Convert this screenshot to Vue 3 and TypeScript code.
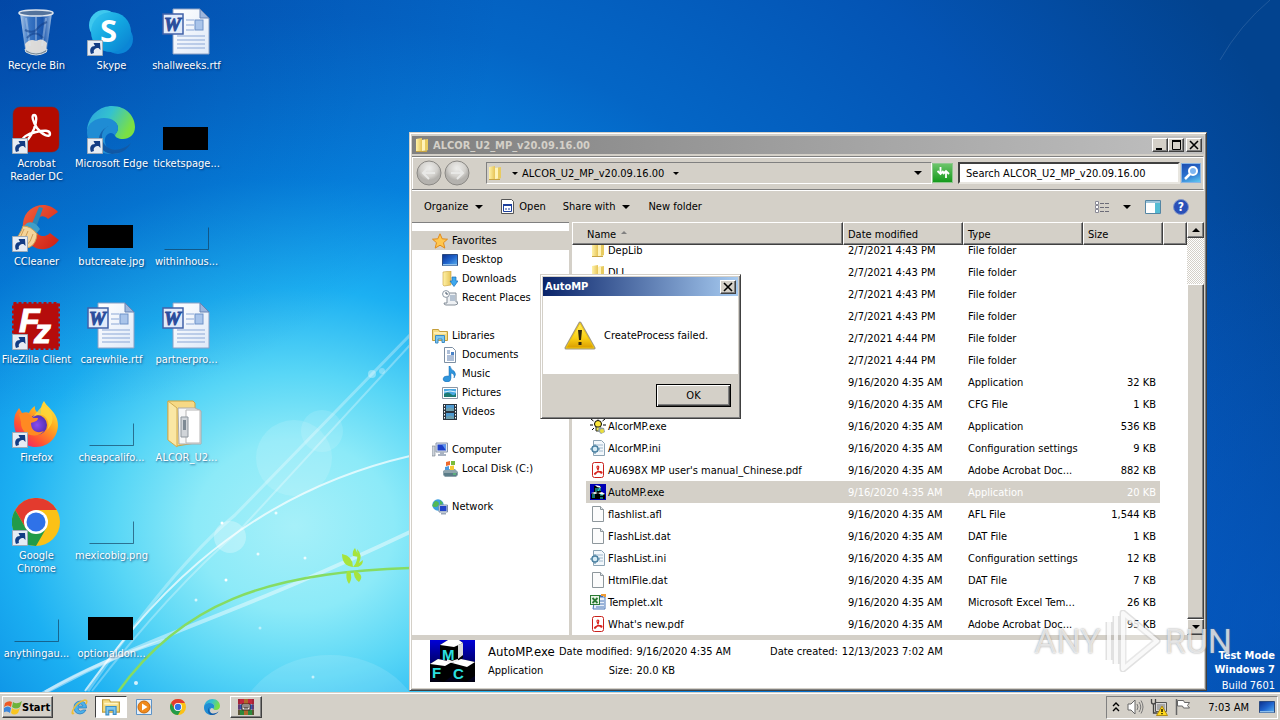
<script setup lang="ts">
import { ref } from 'vue'

interface Shortcut { label: string; icon: string; link?: boolean }
interface NavItem { label: string; icon: string; child?: boolean; gap?: boolean; current?: boolean }
interface FileRow { name: string; icon: string; date: string; type: string; size: string }
interface Letter { text: string; x: number; y: number; kind: string }

const letters: Record<string, Letter[]> = {
  skype: [{ text: 'S', x: 13, y: 34, kind: 'skype-s' }],
  word: [{ text: 'W', x: 2, y: 23, kind: 'word-w' }],
  filezilla: [{ text: 'F', x: 7, y: 30, kind: 'fz-f' }, { text: 'z', x: 22, y: 41, kind: 'fz-z' }],
}

const shortcuts: Shortcut[] = [
  { label: 'Recycle Bin', icon: 'bin' },
  { label: 'Acrobat Reader DC', icon: 'acrobat', link: true },
  { label: 'CCleaner', icon: 'ccleaner', link: true },
  { label: 'FileZilla Client', icon: 'filezilla', link: true },
  { label: 'Firefox', icon: 'firefox', link: true },
  { label: 'Google Chrome', icon: 'chrome', link: true },
  { label: 'anythingau...', icon: 'clear' },
  { label: 'Skype', icon: 'skype', link: true },
  { label: 'Microsoft\u00a0Edge', icon: 'edge', link: true },
  { label: 'butcreate.jpg', icon: 'black' },
  { label: 'carewhile.rtf', icon: 'word' },
  { label: 'cheapcalifo...', icon: 'clear' },
  { label: 'mexicobig.png', icon: 'clear' },
  { label: 'optionaldon...', icon: 'black' },
  { label: 'shallweeks.rtf', icon: 'word' },
  { label: 'ticketspage...', icon: 'black' },
  { label: 'withinhous...', icon: 'clear' },
  { label: 'partnerpro...', icon: 'word' },
  { label: 'ALCOR_U2...', icon: 'bigfolder' },
]

const places: NavItem[] = [
  { label: 'Favorites', icon: 'star', current: true },
  { label: 'Desktop', icon: 'desktop', child: true },
  { label: 'Downloads', icon: 'downloads', child: true },
  { label: 'Recent Places', icon: 'recent', child: true },
  { label: 'Libraries', icon: 'libraries', gap: true },
  { label: 'Documents', icon: 'document', child: true },
  { label: 'Music', icon: 'music', child: true },
  { label: 'Pictures', icon: 'pictures', child: true },
  { label: 'Videos', icon: 'videos', child: true },
  { label: 'Computer', icon: 'computer', gap: true },
  { label: 'Local Disk (C:)', icon: 'disk', child: true },
  { label: 'Network', icon: 'network', gap: true },
]

const feb = (m: number) => `2/7/2021 4:${m} PM`
const sep = '9/16/2020 4:35 AM'
const files: FileRow[] = [
  { name: 'DepLib', icon: 'folder', date: feb(43), type: 'File folder', size: '' },
  { name: 'DLL', icon: 'folder', date: feb(43), type: 'File folder', size: '' },
  { name: '', icon: 'folder', date: feb(43), type: 'File folder', size: '' },
  { name: '', icon: 'folder', date: feb(43), type: 'File folder', size: '' },
  { name: '', icon: 'folder', date: feb(44), type: 'File folder', size: '' },
  { name: '', icon: 'folder', date: feb(44), type: 'File folder', size: '' },
  { name: '', icon: 'page', date: sep, type: 'Application', size: '32 KB' },
  { name: '', icon: 'page', date: sep, type: 'CFG File', size: '1 KB' },
  { name: 'AlcorMP.exe', icon: 'bulb', date: sep, type: 'Application', size: '536 KB' },
  { name: 'AlcorMP.ini', icon: 'ini', date: sep, type: 'Configuration settings', size: '9 KB' },
  { name: "AU698X MP user's manual_Chinese.pdf", icon: 'pdf', date: sep, type: 'Adobe Acrobat Doc...', size: '882 KB' },
  { name: 'AutoMP.exe', icon: 'mfc', date: sep, type: 'Application', size: '20 KB' },
  { name: 'flashlist.afl', icon: 'page', date: sep, type: 'AFL File', size: '1,544 KB' },
  { name: 'FlashList.dat', icon: 'page', date: sep, type: 'DAT File', size: '1 KB' },
  { name: 'FlashList.ini', icon: 'ini', date: sep, type: 'Configuration settings', size: '12 KB' },
  { name: 'HtmlFile.dat', icon: 'page', date: sep, type: 'DAT File', size: '7 KB' },
  { name: 'Templet.xlt', icon: 'excel', date: sep, type: 'Microsoft Excel Tem...', size: '26 KB' },
  { name: "What's new.pdf", icon: 'pdf', date: sep, type: 'Adobe Acrobat Doc...', size: '95 KB' },
]

const selected = ref('AutoMP.exe')
const dialogOpen = ref(true)
const query = ref('')
</script>

<template>
  <svg class="defs" width="0" height="0" aria-hidden="true">
    <defs>
      <linearGradient id="gBin" x1="0" x2="1" y1="0" y2="0"><stop offset="0" stop-color="#d4e4f4" stop-opacity=".85" /><stop offset=".3" stop-color="#6f9fdd" stop-opacity=".5" /><stop offset=".7" stop-color="#2a5cae" stop-opacity=".55" /><stop offset="1" stop-color="#c8dcf2" stop-opacity=".8" /></linearGradient>
      <linearGradient id="gSkype" x1="0" x2="1" y1="0" y2="1"><stop offset="0" stop-color="#38c6f0" /><stop offset=".5" stop-color="#12a5e0" /><stop offset="1" stop-color="#0a7cd0" /></linearGradient>
      <linearGradient id="gPaper" x1="0" x2="1" y1="0" y2="1"><stop offset="0" stop-color="#fff" /><stop offset="1" stop-color="#dfe9f8" /></linearGradient>
      <linearGradient id="gEdgeA" x1="0" x2="1" y1="0" y2=".4"><stop offset="0" stop-color="#2a9fe0" /><stop offset=".5" stop-color="#34c2cf" /><stop offset="1" stop-color="#7be043" /></linearGradient>
      <linearGradient id="gEdgeB" x1="0" x2="0" y1="0" y2="1"><stop offset="0" stop-color="#1668b4" /><stop offset="1" stop-color="#0f56a4" /></linearGradient>
      <linearGradient id="gFire" x1=".9" x2=".1" y1="0" y2="1"><stop offset="0" stop-color="#fff04a" /><stop offset=".35" stop-color="#ffab1f" /><stop offset=".7" stop-color="#ff5234" /><stop offset="1" stop-color="#e31580" /></linearGradient>
      <radialGradient id="gPurple"><stop offset="0" stop-color="#8a4cf0" /><stop offset="1" stop-color="#5430b4" /></radialGradient>
      <linearGradient id="gFolder" x1="0" x2="1"><stop offset="0" stop-color="#fff2a8" /><stop offset="1" stop-color="#e6c458" /></linearGradient>
      <linearGradient id="gRed" x1="0" x2="1" y1="0" y2="1"><stop offset="0" stop-color="#f4603c" /><stop offset="1" stop-color="#cc1f14" /></linearGradient>
      <linearGradient id="gWarn" x1="0" x2="0" y1="0" y2="1"><stop offset="0" stop-color="#ffef62" /><stop offset=".6" stop-color="#fbd014" /><stop offset="1" stop-color="#d99c00" /></linearGradient>
      <radialGradient id="gOrb" cy=".3"><stop offset="0" stop-color="#eeeeec" /><stop offset=".7" stop-color="#d2d0cc" /><stop offset="1" stop-color="#b4b2ae" /></radialGradient>
      <linearGradient id="gScreen" x1="0" x2="1" y1="0" y2="1"><stop offset="0" stop-color="#0b2f8c" /><stop offset=".5" stop-color="#1f63cc" /><stop offset="1" stop-color="#5cb4f0" /></linearGradient>
      <linearGradient id="gMfc" x1="0" x2="0" y1="0" y2="1"><stop offset="0" stop-color="#0000d8" /><stop offset="1" stop-color="#000010" /></linearGradient>
    </defs>

    <symbol id="i-bin" viewBox="0 0 48 48">
      <path d="M8 5 13 41q11 8 22 0L40 5Z" fill="url(#gBin)" />
      <path d="M13 36q5-6 11-3 6-4 11 2l-1 8q-10 5-20 0Z" fill="#efe7dc" opacity=".9" />
      <path d="m14 10 4 28M34 10l-4 28M24 9v25" stroke="#dceaf8" stroke-opacity=".35" stroke-width="2" />
      <path d="M13 22q8 4 12-1t10-7M15 30q8-9 16 0" stroke="#123e86" stroke-opacity=".55" stroke-width="2" fill="none" />
      <ellipse cx="24" cy="5" rx="17" ry="3" fill="#54739c" stroke="#dfe6ee" stroke-width="1.500" />
      <path d="M13 41q11 8 22 0l-.6 3q-10 6-20.600 0Z" fill="#7b8a96" stroke="#d6dde2" />
    </symbol>
    <symbol id="i-skype" viewBox="0 0 48 48">
      <circle cx="17" cy="17" r="15" fill="#3fc8ee" /><circle cx="31" cy="31" r="15" fill="#0b86d6" />
      <circle cx="24" cy="24" r="20" fill="url(#gSkype)" />
    </symbol>
    <symbol id="i-word" viewBox="0 0 48 48">
      <path d="M11 1h27l9 9v36H11Z" fill="url(#gPaper)" stroke="#8ba0c4" />
      <path d="M38 1v9h9Z" fill="#9db6dc" stroke="#6683b4" />
      <path d="M15 28h28M15 32h28M15 36h28M15 40h28M24 12h8M24 17h8M24 22h8" stroke="#8ba7d6" />
      <rect x="33" y="12" width="8" height="10" fill="#a9c4ea" stroke="#6f92c8" />
      <rect x="1" y="6" width="20" height="20" fill="#e2ebfa" stroke="#4162a8" stroke-width="1.500" />
    </symbol>
    <symbol id="i-acrobat" viewBox="0 0 48 48">
      <rect x="1" y="1" width="46" height="45" rx="7" fill="#b30b00" stroke="#7b2a2a" stroke-opacity=".5" />
      <path d="M11 35C9 32 15 28 24 26c8-2 14-2 14 2s-8 1-13-6C21 16 19 9 22 9s3 6 0 14c-3 7-8 15-11 12Z" fill="none" stroke="#fff" stroke-width="2.400" stroke-linejoin="round" />
    </symbol>
    <symbol id="i-edge" viewBox="0 0 48 48">
      <path d="M0 25C1 8 14 0 25 0c15 0 23 11 23 21 0 8-6 12-12 12-5 0-8-2-8-4 0-1 3-3 3-7 0-5-5-9-12-9C9 13 2 19 0 25Z" fill="url(#gEdgeA)" />
      <path d="M0 26c0-9 9-14 17-14 9 0 14 5 14 10 0 4-3 6-3 8-3-6-11-2-10 6 1 7 8 12 16 10-3 2-7 2-10 2C10 48 0 38 0 26Z" fill="#1f8cd4" />
      <path d="M22 20c-8 3-9 13-4 19 6 7 17 6 26-2-4 8-12 11-19 11-10-1-14-9-13-16 1-6 5-10 10-12Z" fill="url(#gEdgeB)" />
    </symbol>
    <symbol id="i-ccleaner" viewBox="0 0 48 48">
      <path d="M46 8C35-5 13 1 11 19c-2 15 9 28 22 26 6-1 10-4 14-9l-9-7c-6 6-14 3-15-6-1-10 8-14 13-8Z" fill="url(#gRed)" />
      <path d="m27 3 4 1-7 20-5-2Z" fill="#2a86b8" />
      <path d="M15 19q7-3 13 6l-4 5-13-7Z" fill="#3f9fca" />
      <path d="M11 22q8 0 14 8-1 10-7 13-5 3-17-6 7-5 10-15Z" fill="#f4d49a" stroke="#cf9d55" />
      <path d="M12 25Q9 34 4 38M16 27q-3 9-7 13M21 30q-2 8-7 12" stroke="#cf9d55" fill="none" />
    </symbol>
    <symbol id="i-filezilla" viewBox="0 0 48 48">
      <rect x="1.500" y="1.500" width="45" height="45" fill="#b50c0c" stroke="#b50c0c" stroke-width="3" stroke-dasharray="3 2" />
    </symbol>
    <symbol id="i-firefox" viewBox="0 0 48 48">
      <path d="M3 15C4 12 6 10 7 8l3 5c3-1 5-1 7 0 1-3 3-5 6-7-1 5 3 7 6 8 0-6 0-9 3-13 2 5 10 9 13 18 4 13-5 28-21 28C9 47-1 32 3 15Z" fill="url(#gFire)" />
      <circle cx="25" cy="25" r="10" fill="url(#gPurple)" />
      <path d="M7 14c5-2 12 0 14 4h5c0 3-4 4-7 5 0 8 6 11 13 8-7 9-24 4-23-9Z" fill="#ff8a22" />
      <path d="M20 18q10-7 15 1 3 6 0 11 10-10 2-20-3-4-6-5Z" fill="#ffd83a" opacity=".8" />
    </symbol>
    <symbol id="i-chrome" viewBox="0 0 48 48">
      <circle cx="24" cy="24" r="24" fill="#fbc116" />
      <path d="M3.200 12a24 24 0 0 1 41.600 0H24L13.600 30Z" fill="#e33b2e" />
      <path d="M3.200 12 13.600 30 24 36 34.400 30 24 48A24 24 0 0 1 3.200 12Z" fill="#229b48" />
      <circle cx="24" cy="24" r="12" fill="#fff" /><circle cx="24" cy="24" r="9.500" fill="#2f72e8" />
    </symbol>
    <symbol id="i-black" viewBox="0 0 48 48"><rect x="1" y="21" width="45" height="23" /></symbol>
    <symbol id="i-clear" viewBox="0 0 48 48"><path d="M2.500 45.500h44v-22" fill="none" stroke="#123c5a" stroke-opacity=".65" /></symbol>
    <symbol id="i-bigfolder" viewBox="0 0 48 48">
      <path d="M6 1h25l2 2v40l-18 3-9-6Z" fill="#f6d985" stroke="#cba445" />
      <path d="M16 8h17l6 3v33H17Z" fill="#f7f7f7" stroke="#aaa" /><path d="M24 10h14v33H24Z" fill="#fff" stroke="#b5b5b5" />
      <path d="M19 17h7v20h-7z" fill="#d0d4d8" stroke="#8f979e" /><path d="M21 20h3v10h-3z" fill="#7e8a94" />
      <path d="m6 1 9 7v39L6 40Z" fill="#fae7a4" stroke="#d3ad50" />
    </symbol>
    <symbol id="i-link" viewBox="0 0 16 16">
      <path d="M.5.500h15v15H.500Z" fill="#e6ecf4" stroke="#9daab8" />
      <path d="M4 14C2 9 4 6 8 6L6.500 3 13 3l.5 7-2-2C8 8 6 10 7 13Z" fill="#123c84" />
    </symbol>

    <symbol id="i-folder" viewBox="0 0 16 16"><path d="m2 2 6-1v13l-6 1Z" fill="url(#gFolder)" /><path d="m8 3 6-1v11l-2 1-4-1Z" fill="#e8cb60" /><path d="m8 3 3-.5v11L8 14Z" fill="#fff3b8" /><path d="M2 14.500h11" stroke="#c8a444" /></symbol>
    <symbol id="i-page" viewBox="0 0 16 16"><path d="M2.500.500h8l3 3v12h-11Z" fill="#fcfcfc" stroke="#8e979c" /><path d="M10.500.500v3h3" fill="#dfe6ea" stroke="#8e979c" /></symbol>
    <symbol id="i-ini" viewBox="0 0 16 16"><path d="M3.500.500h8l3 3v12h-11Z" fill="#f2f7fb" stroke="#8da4b4" /><path d="M6 5h7M9 8h4M9 11h4" stroke="#9fb8cc" /><circle cx="5" cy="9" r="3" fill="#d7ecf6" stroke="#4f84a4" stroke-width="1.500" /><path d="M5 4v2M5 12v2M0 9h2M8 9h2M2 6l1 1M8 12 7 11M8 6 7 7M2 12l1-1" stroke="#4f84a4" /></symbol>
    <symbol id="i-pdf" viewBox="0 0 16 16"><rect x="2.500" y=".5" width="11" height="15" rx="2" fill="#fff" stroke="#c9211c" /><path d="M4.500 12C4 10.500 12 8.500 12 10.500S7.500 9 7 5.500C6.800 3.500 9 3.500 8.700 5.500 8.500 8 5.500 13.500 4.500 12Z" fill="none" stroke="#d8251f" stroke-width="1.200" /></symbol>
    <symbol id="i-excel" viewBox="0 0 16 16"><path d="M3 1h10v13H3Z" fill="#3b68b0" /><path d="M5 3h10v12H3Z" fill="#e7eef9" stroke="#4d78b8" /><path d="M10 7h4M10 10h4M6 13h8" stroke="#4d78b8" /><path d="M11 1h4v2" stroke="#ee9b35" fill="none" stroke-width="2" /><rect x=".5" y="1.500" width="9" height="9" fill="#eaf6e6" stroke="#2c7a35" /><path d="m2.500 4 5 5m0-5-5 5" stroke="#2c7a35" stroke-width="1.800" /></symbol>
    <symbol id="i-bulb" viewBox="0 0 16 16"><circle cx="8" cy="6" r="3.500" fill="#ffe83a" stroke="#000" /><path d="M8 0v1.500M1 1l2.500 2M15 1l-2.500 2M0 7h3M13 7h3M2 12l2-2" stroke="#000" /><path d="M6 9h4v4H6Z" fill="#e8e14b" stroke="#333" /><path d="m9 9 5 1 1 4-4 2-3-3Z" fill="#92a0a0" /><circle cx="12" cy="13" r="2" fill="#eddf3c" /></symbol>
    <symbol id="i-mfc" viewBox="0 0 45 42">
      <path d="M0 0h45v42H0Z" fill="url(#gMfc)" />
      <path d="m10 5 8-5h11l4 3v15l-8 5-15-4Z" fill="#000" /><path d="m10 5 8-5h11l4 3-9 4Z" fill="#fff" /><path d="m28 5 5-2v12l-5 4Z" fill="#d8d8d8" />
      <path d="m0 24 8-5 14 3v14l-8 6-14-4Z" fill="#000" /><path d="m0 24 8-5 14 3-7 4Z" fill="#fff" />
      <path d="m22 23 9-4 14 3v14l-9 6-14-4Z" fill="#000" /><path d="m22 23 9-4 14 3-8 5Z" fill="#fff" />
      <path d="m17 20 5 2 6-2" stroke="#f4f4f4" stroke-width="2" fill="none" />
    </symbol>
    <symbol id="i-mfc16" viewBox="0 0 16 16">
      <path d="M0 0h16v16H0Z" fill="#0000b4" /><path d="M4 2h7v6l4 2v5H1v-5l3-2Z" fill="#000" />
      <path d="m5 1 5 1 1 2-4-1Z" fill="#fff" /><path d="M6 4v4M8 4v3l2-3v3" stroke="#2ce0e0" fill="none" /><path d="m1 9 4-1 3 1-3 1ZM8 9l4-1 3 2-3 1Z" fill="#fff" /><path d="M2 11h3M2 13h3M10 11h3M10 14h3" stroke="#2ce0e0" />
    </symbol>
    <symbol id="i-star" viewBox="0 0 16 16"><path d="m8 .8 2.200 5 5.300.4-4 3.500 1.300 5.400L8 12.200l-4.800 2.900 1.300-5.400-4-3.500 5.300-.4Z" fill="#ffc74e" stroke="#e08a1c" /></symbol>
    <symbol id="i-desktop" viewBox="0 0 16 16"><path d="M.5 2.500h15v11H.500Z" fill="url(#gScreen)" stroke="#2b4a80" /><path d="M1 12h14v1.500H1Z" fill="#8ec0ec" /></symbol>
    <symbol id="i-downloads" viewBox="0 0 16 16"><path d="m1 1 8-1v14l-7 1-1-1Z" fill="url(#gFolder)" stroke="#caa03a" stroke-width=".6" /><path d="M10 6h4v4h2l-4 5.500L8 10h2Z" fill="#3fa9ee" stroke="#1b6db8" stroke-width=".7" /></symbol>
    <symbol id="i-recent" viewBox="0 0 16 16"><path d="M5 3h9v9h2q0 3-3 3H4q-2 0-2-2h3Z" fill="#eef1f4" stroke="#78838e" stroke-width=".9" /><path d="M8 6h5M8 8h5M8 10h5" stroke="#7c94b0" /><circle cx="4" cy="4" r="3.400" fill="#fff" stroke="#8d99a5" /><path d="M4 2v2h2" stroke="#456" fill="none" /></symbol>
    <symbol id="i-libraries" viewBox="0 0 16 16"><path d="M.5 1.500h6l1 2h8v9H.500Z" fill="#f5dc82" stroke="#c59f3c" /><path d="M2 5h12" stroke="#fff5c5" stroke-width="1.500" /><path d="M3.500 7.500h9v7H10V11H6v4H3.500Z" fill="#7cc6ef" stroke="#3c8cc4" /></symbol>
    <symbol id="i-document" viewBox="0 0 16 16"><path d="M2.500.500h8l3 3v12h-11Z" fill="#fff" stroke="#7d8fa3" /><path d="M5 4h3M5 6h3M5 9h7M5 11h7M5 13h7" stroke="#5c7fb0" /><path d="M9 5h3v3H9Z" fill="#4a83c8" /></symbol>
    <symbol id="i-music" viewBox="0 0 16 16"><path d="M8 0q1 4 4 5 3 3 0 7 1-4-3-5v5q0 4-4 4-4-.5-4-3 .5-3 4-3h2V0Z" fill="#2f95dc" stroke="#1b6cb4" stroke-width=".5" /></symbol>
    <symbol id="i-pictures" viewBox="0 0 16 16"><path d="M.5 2.500h15v11H.500Z" fill="#fff" stroke="#8a97a5" /><path d="M2 4h12v8H2Z" fill="#4aa8e2" /><path d="M2 9q4-3 7 0t5-1v4H2Z" fill="#1d7a72" /><path d="M2 7q6-2 12 0" stroke="#dff4ff" fill="none" /></symbol>
    <symbol id="i-videos" viewBox="0 0 16 16"><path d="M1 0h14v16H1Z" fill="#2c3640" /><path d="M4 1h8v6H4ZM4 9h8v6H4Z" fill="#4f9bd2" /><path d="M4 5q4-3 8 0v2H4ZM4 13q4-3 8 0v2H4Z" fill="#6d9fae" /><path d="M2.500 1v15M13.500 1v15" stroke="#fff" stroke-dasharray="1.500 1.500" /></symbol>
    <symbol id="i-computer" viewBox="0 0 16 16"><path d="M0 4h3v10H0Z" fill="#cdd3da" stroke="#77808c" stroke-width=".6" /><path d="M4 1h11.500v9H4Z" fill="#dfe6f0" stroke="#8a96aa" /><path d="M5.500 2.500h8.500v6H5.500Z" fill="#1c3fc8" /><path d="M10 2.500h4v6Z" fill="#5c94ee" /><path d="M8 10h4v2h2v2H6v-2h2Z" fill="#a9b3c2" /></symbol>
    <symbol id="i-disk" viewBox="0 0 16 16"><path d="m1 10 3-2h9l3 3v3l-2 2H3l-2-2Z" fill="#8ea4ac" /><path d="M2 12h13v2l-1 1H3l-1-1Z" fill="#5b7c88" /><path d="M11 13h3" stroke="#5be070" /><path d="m4 1 4-1v4L4 5Z" fill="#ee6a2c" /><path d="m9 0 4-.1V4L9 4Z" fill="#79bb3c" /><path d="m3 6 4-1v4L3 9Z" fill="#4b9ade" /><path d="m8 5 4-.5V9L8 9Z" fill="#f7ca32" /></symbol>
    <symbol id="i-network" viewBox="0 0 16 16"><circle cx="6" cy="6" r="5.700" fill="#3c9fe0" /><path d="M3 2q4 0 4 3T3 8 1 5ZM8 1l3 3-3 3Z" fill="#52b856" /><path d="M7 6h8.500v7H7Z" fill="#dbe4f0" stroke="#8090a8" /><path d="M8 7h6.500v5H8Z" fill="#2143c8" /><path d="M9 14h5v1.500H9Z" fill="#9aa6b8" /></symbol>

    <symbol id="i-flag" viewBox="0 0 18 18"><path d="M1 5q4-3 7-1L7 9Q4 6 0 9Z" fill="#ee5a24" /><path d="M9 4q4 3 9-1l-2 6q-4 3-8 0Z" fill="#6db33a" /><path d="M0 10q4-3 7 0l-1 5q-3-3-7 0Z" fill="#3c86da" /><path d="M8 10q4 3 8 0l-2 5q-4 3-7 0Z" fill="#f8c520" /></symbol>
    <symbol id="i-ie" viewBox="0 0 18 18"><path d="M15 12q-2 4-6 4-6-.5-6-6.500T9.500 3q6 .5 6 7H7q0 3 2.500 3 1.500 0 2-1ZM7 8h5q-.5-2-2.500-2T7 8Z" fill="#4db2ea" stroke="#1f78c0" stroke-width=".7" fill-rule="evenodd" /><path d="M3 15q-3 2-1-3Q6 4 14 2q3 0 1 4" stroke="#edbe38" stroke-width="1.600" fill="none" /></symbol>
    <symbol id="i-wmp" viewBox="0 0 18 18"><path d="M1.500 1.500h15v15h-15Z" fill="#e5eef7" stroke="#5c93c8" /><circle cx="9" cy="9" r="6" fill="#f08a1d" stroke="#c96a0c" /><path d="m7 5.500 5.500 3.500L7 12.500Z" fill="#fff" /></symbol>
    <symbol id="i-winrar" viewBox="0 0 18 18"><path d="M1 1h16v5H1Z" fill="#c3273e" /><path d="M1 6.500h16v5H1Z" fill="#3356b8" /><path d="M1 12h16v5H1Z" fill="#2c8a3c" /><path d="M1 1h2v16H1ZM15 1h2v16h-2Z" fill="#8a2030" opacity=".5" /><path d="M7 1h4v16H7Z" fill="#b06a2c" /><path d="M5 6h8v6H5Z" fill="#eee" stroke="#3b2b22" /><path d="M7 7v3h4V7M9 7v3" stroke="#3b2b22" fill="none" /></symbol>
    <symbol id="i-speaker" viewBox="0 0 18 18"><path d="M2 6h3l4-4v14l-4-4H2Z" fill="#fff" stroke="#666" /><path d="M11 6q2 3 0 6M13 4q3.500 5 0 10M15 2.500q4 6.500 0 13" fill="none" stroke="#777" /></symbol>
    <symbol id="i-nettray" viewBox="0 0 18 18"><path d="M5.500 4.500h11v9h-11Z" fill="#d8d8d8" stroke="#555" /><path d="M7 6h8v6H7Z" fill="#a8a8a8" /><path d="M1.500 1v3q0 2 2 2t2-2V1M3.500 6v9h4" fill="none" stroke="#444" stroke-width="1.300" /><path d="m12 8 5.500 9.500h-11Z" fill="#ffd91e" stroke="#a37b00" stroke-width=".8" /><path d="M12 11v3M12 15v1.300" stroke="#000" stroke-width="1.300" /></symbol>
    <symbol id="i-action" viewBox="0 0 18 18"><path d="M2.500 1v16" stroke="#666" stroke-width="1.500" /><path d="M3.500 2.500h6l1 2h5l-2 3 2 2.500h-6l-1-2h-5Z" fill="#fff" stroke="#666" /></symbol>
  </svg>

  <main class="screen">
    <section class="desktop">
      <svg class="wall" viewBox="0 0 1280 692" preserveAspectRatio="none" aria-hidden="true">
        <g fill="#fff">
          <circle cx="294" cy="458" r="38" opacity=".13" /><circle cx="322" cy="431" r="21" opacity=".12" /><circle cx="230" cy="537" r="16" opacity=".28" />
          <circle cx="372" cy="374" r="4" opacity=".35" /><circle cx="382" cy="371" r="3" opacity=".3" />
          <ellipse cx="330" cy="730" rx="92" ry="75" opacity=".12" />
          <circle cx="222" cy="523" r="1.500" /><circle cx="276" cy="513" r="1.500" opacity=".8" /><circle cx="258" cy="554" r="1.500" opacity=".8" /><circle cx="305" cy="558" r="1.500" opacity=".8" /><circle cx="226" cy="580" r="1.500" /><circle cx="196" cy="600" r="1.500" opacity=".7" /><circle cx="136" cy="683" r="2" opacity=".8" /><circle cx="260" cy="628" r="1.500" opacity=".5" /><circle cx="313" cy="677" r="1.500" opacity=".6" />
        </g>
        <g fill="none" stroke="#fff">
          <path d="M88 691Q170 570 235 515L410 335" stroke-width="3" opacity=".3" />
          <path d="M92 691Q170 590 240 530L410 345" stroke-width="2" opacity=".3" />
          <path d="M85 691C130 630 220 500 410 456" stroke-width="2" opacity=".7" />
          <path d="M42 694C160 630 220 622 410 532" stroke-width="4" opacity=".45" />
          <path d="M45 692Q100 660 165 640" stroke-width="3" opacity=".5" />
          <path d="M1220 60Q1240 25 1270 0" stroke-width="1" opacity=".12" />
        </g>
        <path d="M118 692C180 605 265 572 410 568" fill="none" stroke="#86dc62" stroke-width="2.500" />
        <path d="M342 554q11 2 11 13-11-1-11-13Zm11 13q6-6 4-18 6 6 2 14l4-3q0 8-10 7M353 556q-1-5 2-8l4 9M347 571q-2 8 2 13 4-6 1-13m5 0q10 4 4 11-6-4-5-11" fill="#a6e43c" />
      </svg>

      <nav class="shortcuts" aria-label="Desktop">
        <a v-for="s in shortcuts" :key="s.label" href="#" class="shortcut">
          <span class="thumb">
            <svg width="48" height="48" aria-hidden="true">
              <use :href="'#i-' + s.icon" />
              <text v-for="l in letters[s.icon] ?? []" :key="l.kind" :class="l.kind" :x="l.x" :y="l.y">{{ l.text }}</text>
            </svg>
            <svg v-if="s.link" class="arrow" width="16" height="16" aria-hidden="true"><use href="#i-link" /></svg>
          </span>
          <span class="caption">{{ s.label }}</span>
        </a>
      </nav>

      <section class="window explorer" aria-label="ALCOR_U2_MP_v20.09.16.00">
        <header class="titlebar inactive">
          <svg width="16" height="16" aria-hidden="true"><use href="#i-folder" /></svg>
          <h1>ALCOR_U2_MP_v20.09.16.00</h1>
          <div class="controls">
            <button class="ctl" aria-label="Minimize"><svg width="12" height="10"><path d="M2 8h6v2H2z" /></svg></button>
            <button class="ctl" aria-label="Maximize"><svg width="12" height="10"><path d="M2.500 1v8.500h8V1" fill="none" stroke="#000" /><path d="M2 0h9v2H2z" /></svg></button>
            <button class="ctl apart" aria-label="Close"><svg width="12" height="10"><path d="m2 1 8 8m0-8-8 8" stroke="#000" stroke-width="1.600" /></svg></button>
          </div>
        </header>

        <div class="navbar">
          <button class="orb" aria-label="Back"><svg width="26" height="26"><circle cx="13" cy="13" r="12" fill="url(#gOrb)" stroke="#8b8985" /><path d="m13 7-6 6 6 6M8 13h11" fill="none" stroke="#e8e8e6" stroke-width="2" /></svg></button>
          <button class="orb" aria-label="Forward"><svg width="26" height="26"><circle cx="13" cy="13" r="12" fill="url(#gOrb)" stroke="#8b8985" /><path d="m13 7 6 6-6 6M18 13H7" fill="none" stroke="#e8e8e6" stroke-width="2" /></svg></button>
          <div class="address">
            <svg width="16" height="16" aria-hidden="true"><use href="#i-folder" /></svg>
            <i class="caret small"></i>
            <a href="#">ALCOR_U2_MP_v20.09.16.00</a>
            <i class="caret small"></i>
            <i class="caret last"></i>
          </div>
          <button class="refresh" aria-label="Refresh"><svg width="18" height="18"><path d="M6.500 3v6M3.500 7l3 3 3-3M12 14V8M9 10l3-3 3 3" fill="none" stroke="#fff" stroke-width="1.800" /></svg></button>
          <input v-model="query" class="search" type="text" aria-label="Search" placeholder="Search ALCOR_U2_MP_v20.09.16.00" />
          <button class="go" aria-label="Search"><svg width="18" height="18"><circle cx="11" cy="7" r="4" fill="#7fb6f0" stroke="#fff" stroke-width="2" /><path d="m8 10-5 5" stroke="#fff" stroke-width="2.500" /></svg></button>
        </div>

        <div class="toolbar">
          <button class="tool">Organize<i class="caret"></i></button>
          <button class="tool open"><svg width="13" height="15" aria-hidden="true"><path d="M.5.500h10l2 2v12H.500Z" fill="#fff" stroke="#555" /><path d="M2 5h9v2H2Z" fill="#1c3f9c" /><path d="M2.500 6v6.500h8V6M4 10h2m1 0h2" fill="none" stroke="#1c3f9c" /></svg>Open</button>
          <button class="tool">Share with<i class="caret"></i></button>
          <button class="tool new">New folder</button>
          <span class="grow"></span>
          <button class="tool views" aria-label="Views"><svg width="15" height="12"><path d="M.5.500h3v3h-3zm0 4h3v3h-3zm0 4h3v3h-3z" fill="#fff" stroke="#8a8a96" /><path d="M5 2.500h4m1 0h4M5 6.500h4m1 0h4M5 10.500h4m1 0h4" stroke="#6c6c78" /></svg><i class="caret"></i></button>
          <button class="tool" aria-label="Preview pane"><svg width="16" height="14"><path d="M.5.500h15v13H.500Z" fill="#fff" stroke="#5486a4" /><path d="M1 1h14v2H1Z" fill="#9cc4da" /><path d="M10 3h5v10h-5Z" fill="#54bcd4" /></svg></button>
          <button class="tool help" aria-label="Help"><svg width="16" height="16"><circle cx="8" cy="8" r="7.500" fill="#2a50b8" stroke="#8296c8" /><text x="8" y="12" text-anchor="middle" font-size="12" font-weight="700" fill="#fff">?</text></svg></button>
        </div>

        <div class="body">
          <nav class="places" aria-label="Places">
            <a v-for="p in places" :key="p.label" href="#" class="place" :class="{ child: p.child, gap: p.gap, current: p.current }">
              <svg width="16" height="16" aria-hidden="true"><use :href="'#i-' + p.icon" /></svg>{{ p.label }}
            </a>
          </nav>

          <div class="list">
            <table>
              <thead>
                <tr>
                  <th class="first" scope="col">Name <i class="sort"></i></th><th scope="col">Date modified</th><th scope="col">Type</th><th scope="col">Size</th><th aria-hidden="true"></th>
                </tr>
              </thead>
              <tbody>
                <tr v-for="(f, i) in files" :key="i" :class="{ selected: f.name === selected }" @click="selected = f.name">
                  <td class="name"><svg width="16" height="16" aria-hidden="true"><use :href="f.icon === 'mfc' ? '#i-mfc16' : '#i-' + f.icon" /></svg>{{ f.name }}</td>
                  <td>{{ f.date }}</td><td>{{ f.type }}</td><td class="size">{{ f.size }}</td>
                </tr>
              </tbody>
            </table>
            <div class="scroll">
              <button class="step" aria-label="Scroll up"><i class="caret up"></i></button>
              <div class="track"><div class="handle"></div></div>
              <button class="step" aria-label="Scroll down"><i class="caret"></i></button>
            </div>
          </div>
        </div>

        <footer class="details">
          <svg width="45" height="42" aria-hidden="true"><use href="#i-mfc" /><text class="cube" x="12" y="20">M</text><text class="cube" x="2" y="38">F</text><text class="cube" x="23" y="39">C</text></svg>
          <div class="facts">
            <strong>AutoMP.exe</strong><span class="key">Date modified:</span><span>9/16/2020 4:35 AM</span><span class="key">Date created:</span><span>12/13/2023 7:02 AM</span>
            <span>Application</span><span class="key">Size:</span><span>20.0 KB</span>
          </div>
        </footer>
      </section>

      <section v-if="dialogOpen" class="window dialog" role="alertdialog" aria-labelledby="dlg-title">
        <header class="titlebar">
          <h2 id="dlg-title">AutoMP</h2>
          <button class="ctl" aria-label="Close" @click="dialogOpen = false"><svg width="12" height="10"><path d="m2 1 8 8m0-8-8 8" stroke="#000" stroke-width="1.600" /></svg></button>
        </header>
        <div class="message">
          <svg width="32" height="32" viewBox="0 0 32 32" aria-hidden="true"><path d="M16 4 30 29H2Z" fill="url(#gWarn)" stroke="#a39a80" stroke-width="3" stroke-linejoin="round" /><path d="M16 4 30 29H2Z" fill="url(#gWarn)" stroke="#f3c70c" stroke-linejoin="round" /><path d="M14 11h4l-1 10h-2ZM14.500 23h3v3h-3Z" fill="#33280c" /></svg>
          <p>CreateProcess failed.</p>
        </div>
        <div class="actions"><button class="ok" @click="dialogOpen = false">OK</button></div>
      </section>

      <div class="build"><b>Test Mode</b><b>Windows 7</b><span>Build 7601</span></div>
      <div class="mark">
        <span>ANY</span>
        <svg width="56" height="62" viewBox="0 0 56 62" aria-hidden="true"><path d="M4 12v38M11 6v48M18 3 52 31 18 59Z" fill="none" stroke="#a8a8a8" stroke-width="7" stroke-linejoin="round" opacity=".35" /><path d="M4 12v38M11 6v48M18 3 52 31 18 59Z" fill="#fff" fill-opacity=".3" stroke="#fff" stroke-width="4" stroke-linejoin="round" opacity=".8" /></svg>
        <span>RUN</span>
      </div>
    </section>

    <footer class="taskbar">
      <button class="start"><svg width="18" height="18" aria-hidden="true"><use href="#i-flag" /></svg>Start</button>
      <button class="task ie" aria-label="Internet Explorer"><svg width="18" height="18"><use href="#i-ie" /></svg></button>
      <button class="task pressed" aria-label="Windows Explorer"><svg width="18" height="18"><use href="#i-libraries" /></svg></button>
      <button class="task" aria-label="Media Player"><svg width="18" height="18"><use href="#i-wmp" /></svg></button>
      <button class="task" aria-label="Chrome"><svg width="16" height="16"><use href="#i-chrome" /></svg></button>
      <button class="task" aria-label="Edge"><svg width="16" height="16"><use href="#i-edge" /></svg></button>
      <button class="task raised" aria-label="WinRAR"><svg width="18" height="18"><use href="#i-winrar" /></svg></button>
      <span class="grow"></span>
      <div class="tray">
        <button aria-label="Show hidden icons"><svg width="8" height="10"><path d="m1 4 3-3 3 3M1 9l3-3 3 3" fill="none" stroke="#000" stroke-width="1.400" /></svg></button>
        <button aria-label="Volume"><svg width="18" height="18"><use href="#i-speaker" /></svg></button>
        <button aria-label="Network"><svg width="18" height="18"><use href="#i-nettray" /></svg></button>
        <button aria-label="Action Center"><svg width="18" height="18"><use href="#i-action" /></svg></button>
        <time>7:03 AM</time>
        <button aria-label="Show desktop"><svg width="16" height="16"><use href="#i-desktop" /></svg></button>
      </div>
    </footer>
  </main>
</template>

<style>
html, body { margin: 0; height: 100%; overflow: hidden; }
</style>

<style scoped>
.defs { position: absolute; }
.screen {
  display: flex; flex-direction: column; height: 100vh; overflow: hidden;
  font: 11px/13px "DejaVu Sans Condensed", "DejaVu Sans", sans-serif; color: #000;
}
button, input { font: inherit; color: inherit; margin: 0; padding: 0; border: 0; background: none; }
a { color: inherit; text-decoration: none; }
svg { display: block; flex: none; }
h1, h2, p { margin: 0; font-size: inherit; }
.grow { flex: 1; }

.desktop {
  position: relative; flex: 1; min-height: 0; overflow: hidden;
  background:
    radial-gradient(500px 420px at 0 0, rgba(0, 36, 130, .4), rgba(0, 36, 130, 0)),
    radial-gradient(500px 420px at 100% 90%, rgba(6, 96, 214, .45), rgba(6, 96, 214, 0)),
    radial-gradient(1000px 850px at 23% 76%, #a6f0f9 0%, #8ceaf8 10%, #58d6f6 18%, #1cb0f2 28%, #0684e0 41%, #0466c6 60%, #0454b4 85%, #02438f 110%);
}
.wall { position: absolute; inset: 0; width: 100%; height: 100%; }
.shortcuts {
  position: relative; display: grid; grid-auto-flow: column; justify-content: start;
  grid-template-rows: repeat(7, 98px); grid-auto-columns: 75px; height: 100%; padding-top: 8px; box-sizing: border-box;
}
.shortcut { display: flex; flex-direction: column; align-items: center; gap: 3px; padding-right: 2px; color: #fff; text-align: center; }
.thumb { position: relative; margin-right: 2px; }
.arrow { position: absolute; left: 0; bottom: 0; }
.caption { text-shadow: 1px 1px 2px rgba(0, 30, 80, .7); }
.skype-s { font: 700 31px "Open Sans", sans-serif; fill: #fff; }
.word-w { font: italic 700 19px "Liberation Serif", serif; fill: #2b4d9c; stroke: #2b4d9c; stroke-width: 1px; }
.fz-f, .fz-z { font: italic 700 34px "Liberation Sans", sans-serif; fill: #fff; stroke: #fff; stroke-width: 1px; }
.cube { font: 700 15px "Liberation Sans", sans-serif; fill: #2ce0e0; }

.window { position: absolute; display: flex; flex-direction: column; background: #d4d0c8; border: 1px solid; border-color: #d4d0c8 #404040 #404040 #d4d0c8; box-shadow: inset 1px 1px #fff, inset -1px -1px #808080; }
.explorer { left: 409px; right: 73px; top: 132px; bottom: 1px; padding: 3px 2px 2px; }
.titlebar { display: flex; align-items: center; height: 18px; padding: 0 2px; gap: 3px; color: #fff; font-weight: 700; background: linear-gradient(90deg, #0a246a, #a6caf0); }
.titlebar.inactive { color: #d4d0c8; background: linear-gradient(90deg, #808080, #c0c0c0); }
.titlebar h1, .titlebar h2 { flex: 1; }
.controls { display: flex; }
.ctl { display: grid; place-items: center; width: 16px; height: 14px; background: #d4d0c8; border: 1px solid; border-color: #fff #404040 #404040 #fff; box-shadow: inset -1px -1px #808080; }
.apart { margin-left: 2px; }

.navbar { display: flex; align-items: center; height: 34px; margin-top: 2px; padding: 0 2px 0 4px; box-sizing: border-box; border-top: 1px solid #808080; border-bottom: 1px solid #808080; border-right: 1px solid #fff; box-shadow: inset 1px 1px #fff; }
.orb { margin-right: 2px; }
.address { display: flex; align-items: center; flex: 1; gap: 5px; height: 20px; margin-left: 14px; border: 1px solid; border-color: #808080 #fff #fff #808080; }
.address .last { margin-left: auto; margin-right: 9px; }
.caret { display: inline-block; border: 4px solid transparent; border-top-color: #000; border-bottom: 0; }
.caret.small { border-width: 3px 3px 0; margin-left: 4px; }
.caret.small + a { margin-left: -1px; }
.caret.up { border-top: 0; border-bottom: 4px solid #000; }
.refresh, .go { display: grid; place-items: center; width: 21px; height: 20px; background: linear-gradient(#6cc46a, #159a1c); border: 1px solid #8fc88e; box-sizing: border-box; }
.go { width: 20px; background: linear-gradient(160deg, #1c4cb0, #2c74d0 55%, #60c8f0); border-color: #88b4e4; }
.search { width: 222px; height: 22px; margin: 0 1px 0 5px; padding: 0 6px; box-sizing: border-box; background: #fff; border: 2px solid; border-color: #404040 #e8e6e0 #e8e6e0 #404040; }
.search::placeholder { color: #000; opacity: 1; }

.toolbar { display: flex; align-items: center; height: 32px; padding: 0 15px 0 12px; border-top: 1px solid #fff; box-sizing: border-box; }
.tool { display: flex; align-items: center; gap: 7px; margin-right: 18px; }
.tool.open { gap: 5px; margin-right: 17px; }
.tool.views { margin-right: 14px; gap: 13px; }
.tool.views + .tool { margin-right: 12px; }
.tool.help { margin-right: 0; }

.body { display: flex; flex: 1; min-height: 0; }
.places { width: 157px; flex: none; box-sizing: border-box; padding-top: 8px; background: #fff; border-top: 1px solid #808080; overflow: hidden; }
.place { display: flex; align-items: center; gap: 4px; height: 19px; padding-left: 20px; white-space: nowrap; }
.place.child { padding-left: 30px; }
.place.gap { margin-top: 19px; }
.place.current { background: #d4d0c8; }
.list { display: flex; flex: 1; min-width: 0; margin-left: 3px; background: #fff; overflow: hidden; }
table, thead, tbody { display: block; }
table { flex: 1; min-width: 0; overflow: hidden; }
thead { position: relative; z-index: 1; }
tr { display: grid; grid-template-columns: minmax(0, 1fr) 120px 120px 80px 24px; }
th { height: 23px; box-sizing: border-box; padding: 5px 0 0 4px; font-weight: 400; text-align: left; background: #d4d0c8; border: 1px solid; border-color: #fff #404040 #404040 #fff; box-shadow: inset -1px -1px #808080; }
th.first { padding-left: 14px; }
.sort { display: inline-block; margin: 0 0 4px 2px; border: 3px solid transparent; border-top: 0; border-bottom-color: #808080; }
tbody { margin: -6px 27px 0 14px; }
tbody tr { grid-template-columns: minmax(0, 1fr) 120px 120px 77px; height: 22px; align-items: center; white-space: nowrap; }
td { padding: 0 0 0 5px; }
td.name { display: flex; align-items: center; gap: 2px; padding-left: 4px; }
td.size { padding: 0 4px 0 0; text-align: right; }
tr.selected { background: #d4d0c8; color: #fff; }
tr.selected .name { color: #000; }
.scroll { display: flex; flex-direction: column; width: 17px; flex: none; }
.step { display: grid; place-items: center; height: 16px; background: #d4d0c8; border: 1px solid; border-color: #fff #404040 #404040 #fff; box-shadow: inset -1px -1px #808080; box-sizing: border-box; }
.track { flex: 1; display: flex; flex-direction: column; justify-content: flex-end; background: repeating-conic-gradient(#d4d0c8 0 25%, #fff 0 50%) 0 0 / 2px 2px; }
.handle { height: 88%; background: #d4d0c8; border: 1px solid; border-color: #fff #404040 #404040 #fff; box-shadow: inset -1px -1px #808080; box-sizing: border-box; }
.details { display: flex; gap: 13px; height: 48px; margin-top: 5px; padding-left: 18px; background: #fff; flex: none; }
.facts { display: grid; grid-template-columns: 67px auto auto auto auto; justify-content: start; align-content: start; align-items: center; column-gap: 4px; grid-auto-rows: 19px; padding-top: 2px; white-space: nowrap; }
.facts strong { font-size: 13px; font-weight: 400; }
.facts .key { text-align: right; }
.facts .key:nth-child(4) { padding-left: 35px; }

.dialog { left: 540px; top: 274px; width: 195px; padding: 2px; }
.dialog .titlebar { height: 19px; }
.message { display: flex; align-items: center; gap: 8px; height: 78px; padding-left: 21px; background: #fff; }
.actions { display: flex; justify-content: flex-end; padding: 10px 7px 9px; }
.ok { width: 75px; height: 23px; border: 1px solid #000; box-shadow: inset 1px 1px #fff, inset -1px -1px #404040, inset -2px -2px #808080; }

.build { position: absolute; right: 5px; bottom: 0; display: flex; flex-direction: column; gap: 1px; color: #fff; text-align: right; }
.build span { margin: 2px 0 0; }
.mark { position: absolute; right: 48px; bottom: 20px; display: flex; align-items: center; gap: 4px; color: rgba(255, 255, 255, .7); font: 34px/62px Roboto, sans-serif; text-shadow: 0 0 2px rgba(120, 120, 120, .8); pointer-events: none; }

.taskbar { display: flex; align-items: center; height: 28px; flex: none; box-sizing: border-box; padding: 1px 2px 0; background: #d4d0c8; border-top: 1px solid #d4d0c8; box-shadow: inset 0 1px #fff; }
.start { display: flex; align-items: center; gap: 0; height: 22px; padding: 0 2px 0 1px; margin-right: 11px; font-size: 11px; font-weight: 700; border: 1px solid; border-color: #fff #404040 #404040 #fff; box-shadow: inset -1px -1px #808080; }
.task { display: grid; place-items: center; width: 34px; height: 22px; box-sizing: border-box; }
.task.ie { width: 31px; }
.task.pressed { width: 32px; background: #fff; border: 1px solid; border-color: #404040 #fff #fff #404040; }
.task.raised { width: 32px; margin-left: 1px; border: 1px solid; border-color: #fff #404040 #404040 #fff; box-shadow: inset -1px -1px #808080; }
.tray { display: flex; align-items: center; gap: 6px; height: 21px; padding: 0 2px 0 5px; border: 1px solid; border-color: #808080 #fff #fff #808080; }
.tray time { margin: 0 4px 0 10px; }
</style>
